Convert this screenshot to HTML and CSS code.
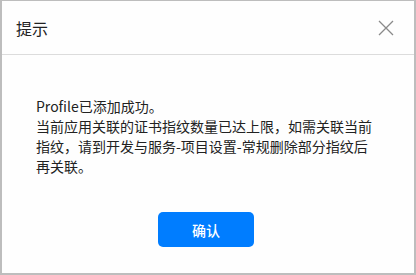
FILE: index.html
```html
<!DOCTYPE html>
<html lang="zh">
<head>
<meta charset="utf-8">
<link rel="stylesheet" href="styles.css">
</head>
<body>
<div class="dialog">
  <div class="header">
    <span class="title">提示</span>
    <svg class="close" width="16" height="16" viewBox="0 0 16 16"><path d="M1 1 L15 15 M15 1 L1 15" stroke="#8a8a8a" stroke-width="1.3" fill="none"/></svg>
  </div>
  <div class="content">
    <p class="msg">Profile已添加成功。<br>当前应用关联的证书指纹数量已达上限，如需关联当前指纹，请到开发与服务-项目设置-常规删除部分指纹后再关联。</p>
  </div>
  <div class="footer">
    <button class="ok">确认</button>
  </div>
</div>
</body>
</html>
```
FILE: styles.css
```css
html, body {
  margin: 0;
  padding: 0;
  background: #fff;
}
.dialog {
  box-sizing: border-box;
  width: 416px;
  height: 275px;
  border: 2px solid #bdbdbd;
  border-top-width: 1px;
  background: #fefefe;
  display: flex;
  flex-direction: column;
  font-family: "Noto Sans CJK SC", "Noto Sans", sans-serif;
}
.header {
  height: 53px;
  border-bottom: 1px solid #dcdcdc;
  display: flex;
  align-items: center;
  justify-content: space-between;
  padding: 0 20px 0 14px;
}
.title {
  font-size: 16px;
  color: #222;
  line-height: 20px;
}
.close {
  display: block;
}
.content {
  padding: 41px 34px 0 34px;
  height: 116px;
}
.msg {
  margin: 0;
  font-size: 14px;
  line-height: 20px;
  color: #222;
}
.footer {
  display: flex;
  justify-content: center;
}
.ok {
  width: 96px;
  height: 35px;
  border: none;
  border-radius: 5px;
  background: #007dff;
  color: #fff;
  font-family: "Noto Sans CJK SC", sans-serif;
  font-size: 14px;
  font-weight: 500;
  margin-right: 4px;
}
```
